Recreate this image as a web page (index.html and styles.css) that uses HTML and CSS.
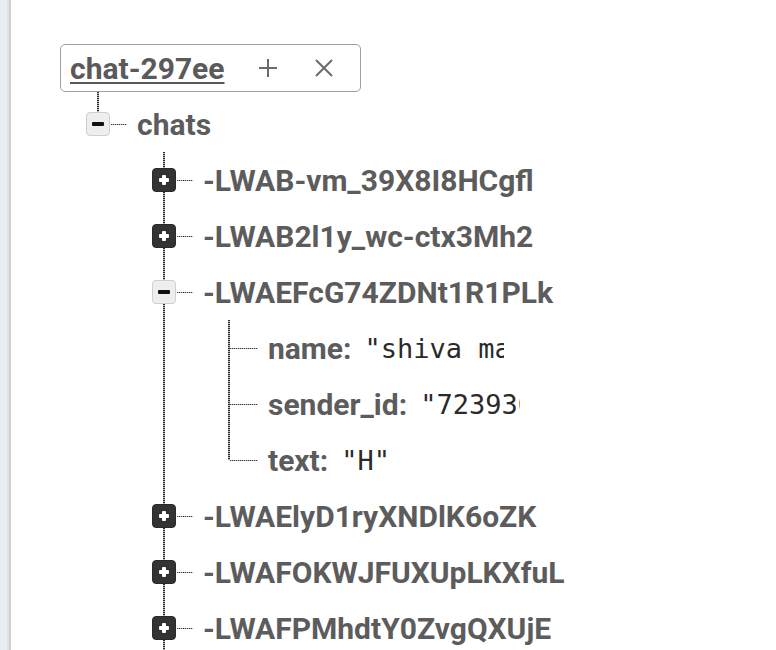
FILE: index.html
```html
<!DOCTYPE html>
<html>
<head>
<meta charset="utf-8">
<link rel="stylesheet" href="styles.css">
</head>
<body>
<div class="page">
  <div class="sidebar"></div>
  <main class="main">
    <div class="root-box">
      <a class="root-name">chat-297ee</a>
      <svg class="icon-plus" width="20" height="20" viewBox="0 0 20 20"><path d="M10 1v18M1 10h18" stroke="#6b6b6b" stroke-width="2" fill="none"/></svg>
      <svg class="icon-x" width="20" height="20" viewBox="0 0 20 20"><path d="M2 2l16 16M18 2L2 18" stroke="#6b6b6b" stroke-width="2" fill="none"/></svg>
    </div>
    <ul class="tree">
      <li>
        <div class="row row-chats">
          <span class="toggle minus"></span><span class="conn"></span><span class="key">chats</span>
        </div>
        <ul class="children">
          <li><div class="row"><span class="toggle plus"></span><span class="conn"></span><span class="key">-LWAB-vm_39X8I8HCgfl</span></div></li>
          <li><div class="row"><span class="toggle plus"></span><span class="conn"></span><span class="key">-LWAB2l1y_wc-ctx3Mh2</span></div></li>
          <li>
            <div class="row"><span class="toggle minus"></span><span class="conn"></span><span class="key">-LWAEFcG74ZDNt1R1PLk</span></div>
            <ul class="leaves">
              <li class="leaf"><span class="conn conn-leaf"></span><span class="key">name:</span><span class="val val-name">"shiva maurya"</span></li>
              <li class="leaf"><span class="conn conn-leaf"></span><span class="key">sender_id:</span><span class="val val-sender">"7239304412"</span></li>
              <li class="leaf"><span class="conn conn-leaf"></span><span class="key">text:</span><span class="val">"H"</span></li>
            </ul>
          </li>
          <li><div class="row"><span class="toggle plus"></span><span class="conn"></span><span class="key">-LWAElyD1ryXNDlK6oZK</span></div></li>
          <li><div class="row"><span class="toggle plus"></span><span class="conn"></span><span class="key">-LWAFOKWJFUXUpLKXfuL</span></div></li>
          <li><div class="row"><span class="toggle plus"></span><span class="conn"></span><span class="key">-LWAFPMhdtY0ZvgQXUjE</span></div></li>
        </ul>
      </li>
    </ul>
  </main>
</div>
</body>
</html>
```

FILE: styles.css
```css
html, body {
  margin: 0;
  padding: 0;
  background: #ffffff;
  height: 100%;
  overflow: hidden;
}

.page {
  display: flex;
  height: 650px;
  font-family: Roboto, "Liberation Sans", sans-serif;
}

.sidebar {
  width: 11px;
  flex: none;
  background: linear-gradient(to right, #e9eef1 0 7px, #dfe3e6 7px 9px, #cbcfd2 9px 11px);
}

.main {
  flex: 1;
  padding: 44px 0 0 49px;
  overflow: hidden;
}

.root-box {
  display: flex;
  align-items: center;
  box-sizing: border-box;
  width: 301px;
  height: 48px;
  padding-left: 9px;
  border: 1px solid #a0a0a0;
  border-radius: 5px;
}

.root-name {
  font-size: 30px;
  font-weight: 700;
  color: #5a5a5a;
  text-decoration: underline;
  text-decoration-thickness: 2px;
  text-underline-offset: 3px;
}

.icon-plus {
  margin-left: 33px;
}

.icon-x {
  margin-left: 36px;
}

ul {
  list-style: none;
  margin: 0;
  padding: 0;
}

.tree {
  padding-top: 4px;
  background: repeating-linear-gradient(to bottom, #2e2e2e 0 1px, #b5b5b5 1px 2px) no-repeat;
  background-size: 2px 20px;
  background-position: 37px 0;
}

.row {
  display: flex;
  align-items: center;
  height: 56px;
}

.row-chats {
  padding-left: 26px;
}

.children {
  padding-left: 92px;
  background: repeating-linear-gradient(to bottom, #2e2e2e 0 1px, #b5b5b5 1px 2px) no-repeat;
  background-size: 2px 100%;
  background-position: 103px 0;
}

.toggle {
  flex: none;
  position: relative;
  box-sizing: border-box;
  width: 24px;
  height: 24px;
  border-radius: 4px;
}

.toggle.plus {
  background: #333333;
  border: 1px solid #2a2a2a;
}

.toggle.plus::before,
.toggle.plus::after {
  content: "";
  position: absolute;
  background: #ffffff;
  border-radius: 1px;
}

.toggle.plus::before {
  left: 6px;
  top: 9px;
  width: 10px;
  height: 4px;
}

.toggle.plus::after {
  left: 9px;
  top: 6px;
  width: 4px;
  height: 10px;
}

.toggle.minus {
  background: #eeeeee;
  border: 1px solid #cfcfcf;
}

.toggle.minus::before {
  content: "";
  position: absolute;
  left: 5px;
  top: 9px;
  width: 12px;
  height: 4px;
  border-radius: 1px;
  background: #111111;
}

.conn {
  flex: none;
  width: 16px;
  height: 1px;
  margin: 0 10px 0 1px;
  background: repeating-linear-gradient(to right, #333 0 1px, #c0c0c0 1px 2px);
}

.key {
  font-size: 30px;
  font-weight: 700;
  color: #5c5c5c;
  white-space: nowrap;
}

.leaves {
  padding-left: 76px;
}

.leaf {
  display: flex;
  align-items: center;
  height: 56px;
  background: repeating-linear-gradient(to bottom, #2e2e2e 0 1px, #b5b5b5 1px 2px) no-repeat;
  background-size: 2px 100%;
  background-position: 0 0;
}

.leaf:last-child {
  background-size: 2px 50%;
}

.conn.conn-leaf {
  width: 28px;
  margin: 0 10px 0 2px;
}

.val {
  font-family: "DejaVu Sans Mono", "Liberation Mono", monospace;
  font-size: 27px;
  color: #2a2a2a;
  white-space: nowrap;
  overflow: hidden;
  margin-left: 13px;
}

.val-name {
  width: 139px;
}

.val-sender {
  width: 100px;
}
```
